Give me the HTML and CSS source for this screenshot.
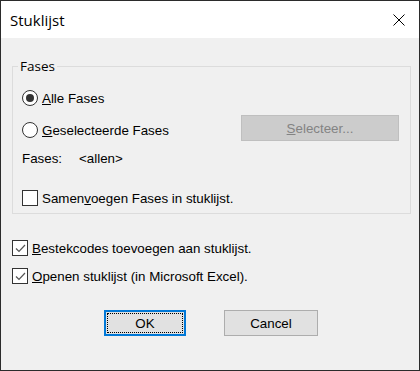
FILE: index.html
```html
<!DOCTYPE html>
<html lang="nl">
<head>
    <meta charset="UTF-8">
    <title>Stuklijst</title>
    <link rel="stylesheet" href="styles.css">
</head>
<body>
    <div class="dialog">
        <div class="titlebar">
            <span class="title">Stuklijst</span>
            <svg class="close" width="12" height="12" viewBox="0 0 12 12">
                <path d="M0.5 0.5 L11.5 11.5 M11.5 0.5 L0.5 11.5" stroke="#000" stroke-width="1" fill="none"/>
            </svg>
        </div>

        <div class="content">
            <!-- Fases groep -->
            <fieldset class="group">
                <legend>Fases</legend>
                <div class="row radio-row">
                    <span class="radio checked"></span>
                    <span class="label"><u>A</u>lle Fases</span>
                </div>
                <div class="row radio-row">
                    <span class="radio"></span>
                    <span class="label"><u>G</u>eselecteerde Fases</span>
                    <button class="btn disabled" disabled><u>S</u>electeer...</button>
                </div>
                <div class="row fases-row">
                    <span class="fases-label">Fases:</span>
                    <span>&lt;allen&gt;</span>
                </div>
                <div class="row check-row merge">
                    <span class="check"></span>
                    <span class="label">Samen<u>v</u>oegen Fases in stuklijst.</span>
                </div>
            </fieldset>

            <div class="row check-row first">
                <span class="check checked">
                    <svg width="13" height="13" viewBox="0 0 13 13"><path d="M2 6.5 L5 9.5 L11 3" stroke="#555" stroke-width="1.2" fill="none"/></svg>
                </span>
                <span class="label"><u>B</u>estekcodes toevoegen aan stuklijst.</span>
            </div>
            <div class="row check-row second">
                <span class="check checked">
                    <svg width="13" height="13" viewBox="0 0 13 13"><path d="M2 6.5 L5 9.5 L11 3" stroke="#555" stroke-width="1.2" fill="none"/></svg>
                </span>
                <span class="label"><u>O</u>penen stuklijst (in Microsoft Excel).</span>
            </div>

            <div class="buttons">
                <button class="btn ok"><span class="focus">OK</span></button>
                <button class="btn cancel">Cancel</button>
            </div>
        </div>
    </div>
</body>
</html>
```

FILE: styles.css
```css
* {
    margin: 0;
    padding: 0;
    box-sizing: border-box;
}

body {
    font-family: 'Liberation Sans', Arial, sans-serif;
    font-size: 13.35px;
    color: #000;
    background: #f0f0f0;
}

.dialog {
    width: 420px;
    height: 371px;
    border: 1px solid #2b2b2b;
    background: #f0f0f0;
    display: flex;
    flex-direction: column;
}

.titlebar {
    height: 37px;
    background: #fff;
    display: flex;
    align-items: center;
    padding-left: 9px;
    padding-right: 14px;
}

.title {
    font-family: 'Open Sans', 'Noto Sans', sans-serif;
    font-size: 15px;
    flex: 1;
}

.close {
    display: block;
}

.content {
    padding: 20px 8px 0 11px;
}

.group {
    border: 1px solid #dcdcdc;
    padding: 8px 11px 5px 9px;
    width: 399px;
}

.group legend {
    font-family: 'Open Sans', 'Noto Sans', sans-serif;
    font-size: 13.5px;
    line-height: 16px;
    padding: 0 2px;
    margin-left: -4px;
}

.row {
    display: flex;
    align-items: center;
}

.radio-row {
    height: 32px;
}

.fases-row {
    height: 24px;
}

.fases-label {
    width: 57px;
}

.check-row {
    height: 20px;
}

.merge {
    margin-top: 18px;
}

.first {
    margin-top: 24px;
}

.second {
    margin-top: 8px;
}

.radio {
    width: 16px;
    height: 16px;
    border: 1px solid #333;
    border-radius: 50%;
    background: #fff;
    margin-right: 4px;
    display: flex;
    align-items: center;
    justify-content: center;
}

.radio.checked::after {
    content: '';
    width: 8px;
    height: 8px;
    border-radius: 50%;
    background: #333;
}

.check {
    width: 16px;
    height: 16px;
    border: 1px solid #333;
    background: #fff;
    margin-right: 4px;
    display: flex;
    align-items: center;
    justify-content: center;
}

.check svg {
    display: block;
}

.btn {
    font-family: 'Liberation Sans', Arial, sans-serif;
    font-size: 13.35px;
    height: 26px;
    background: #e1e1e1;
    border: 1px solid #adadad;
    color: #000;
}

.btn.disabled {
    margin-left: auto;
    align-self: flex-start;
    margin-top: 1px;
    width: 158px;
    background: #cccccc;
    border-color: #bfbfbf;
    color: #838383;
}

.buttons {
    display: flex;
    gap: 38px;
    padding-left: 92px;
    margin-top: 24px;
}

.ok {
    width: 82px;
    border: 2px solid #0078d7;
    padding: 1px;
}

.ok .focus {
    display: flex;
    align-items: center;
    justify-content: center;
    height: 100%;
    border: 1px dotted #000;
}

.cancel {
    width: 94px;
}

u {
    text-decoration: underline;
    text-underline-offset: 1px;
}
```
